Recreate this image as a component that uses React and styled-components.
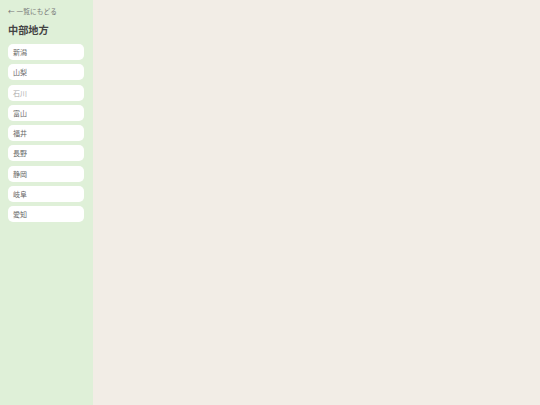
import React from "react";
import styled, { createGlobalStyle } from "styled-components";

const Global = createGlobalStyle`
  html, body { margin: 0; padding: 0; height: 100%; }
  body { font-family: "Noto Sans CJK JP", "Noto Sans", sans-serif; background: #f2ede6; }
  #root { height: 100%; }
`;

const Layout = styled.div`
  display: flex;
  width: 540px;
  height: 405px;
`;

const Sidebar = styled.aside`
  width: 93px;
  flex: none;
  background: #dff0d8;
  padding: 6px 8px 0 8px;
  box-sizing: border-box;
  display: flex;
  flex-direction: column;
`;

const Main = styled.main`
  flex: 1;
  background: #f2ede6;
`;

const Back = styled.a`
  font-size: 6.6px;
  line-height: 11px;
  color: #777;
  text-decoration: none;
  letter-spacing: 0.2px;
`;

const Title = styled.h2`
  margin: 6px 0 7px 0;
  font-size: 10.2px;
  line-height: 14px;
  font-weight: 700;
  color: #444;
`;

const List = styled.ul`
  list-style: none;
  margin: 0;
  padding: 0;
  display: flex;
  flex-direction: column;
  gap: 4.3px;
`;

const Item = styled.li`
  width: 76px;
  height: 16px;
  background: #fff;
  border-radius: 5px;
  box-sizing: border-box;
  padding-left: 5px;
  display: flex;
  align-items: center;
  font-size: 7px;
  color: ${(p) => (p.$muted ? "#aaa" : "#666")};
`;

const prefs = ["新潟", "山梨", "石川", "富山", "福井", "長野", "静岡", "岐阜", "愛知"];

export default function App() {
  return (
    <>
      <Global />
      <Layout>
        <Sidebar>
          <Back href="#">← 一覧にもどる</Back>
          <Title>中部地方</Title>
          <List>
            {prefs.map((p) => (
              <Item key={p} $muted={p === "石川"}>{p}</Item>
            ))}
          </List>
        </Sidebar>
        <Main />
      </Layout>
    </>
  );
}
